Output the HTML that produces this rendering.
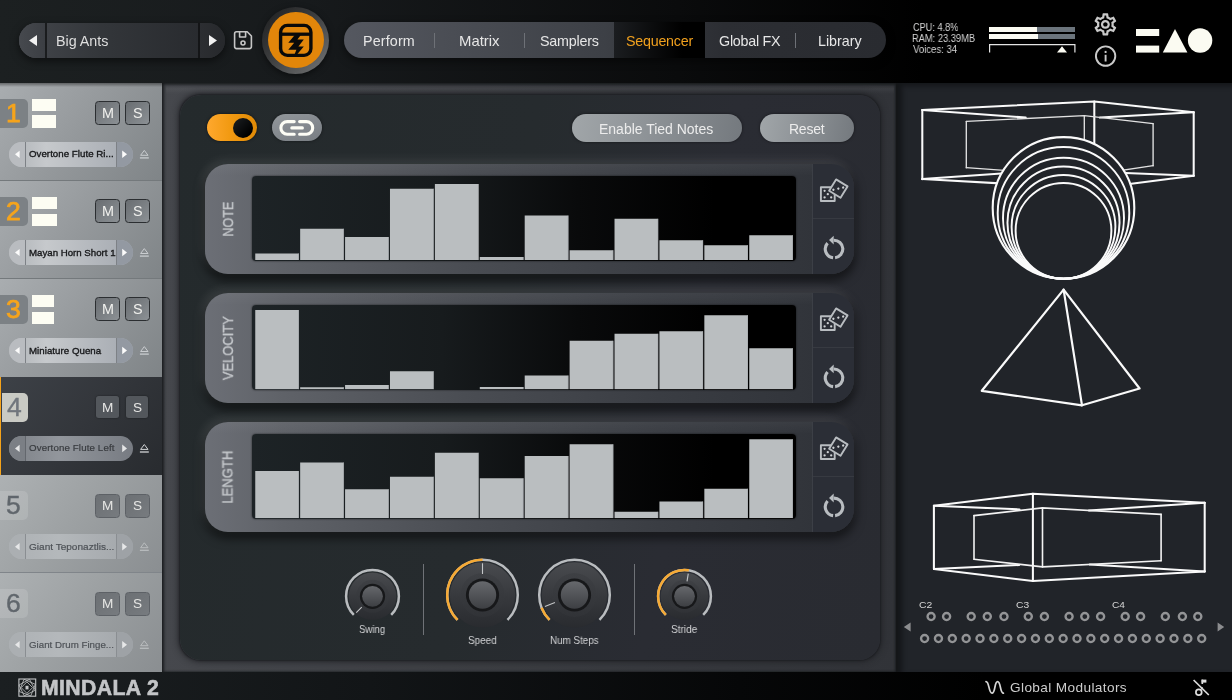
<!DOCTYPE html>
<html><head><meta charset="utf-8"><title>Mindala 2</title>
<style>
html,body{margin:0;padding:0;}
body{width:1232px;height:700px;overflow:hidden;background:#000;font-family:"Liberation Sans",sans-serif;position:relative;}
.a{position:absolute;}
.t{position:absolute;white-space:nowrap;font-family:"Liberation Sans",sans-serif;will-change:transform;}
svg{position:absolute;overflow:visible;}
</style></head><body>

<div class="a" style="left:0;top:0;width:1232px;height:83px;background:linear-gradient(90deg,#1c2021 0%,#171a1c 25%,#0a0b0c 55%,#000 75%);"></div>
<div class="a" style="left:18.7px;top:22.6px;width:206.2px;height:35.9px;border-radius:18px;background:linear-gradient(90deg,#44474c 0%,#33363a 40%,#26282c 100%);box-shadow:0 3px 8px rgba(0,0,0,.55);overflow:hidden;"><div class="a" style="left:0;top:0;width:27px;height:36px;background:linear-gradient(90deg,#46494e,#3b3e43);"></div><div class="a" style="left:26.6px;top:0;width:1.5px;height:36px;background:#1a1c1e;"></div><div class="a" style="left:179.8px;top:0;width:1.5px;height:36px;background:#141517;"></div><div class="a" style="left:181.5px;top:0;width:26px;height:36px;background:linear-gradient(90deg,#2c2e32,#26282b);"></div></div>
<svg style="left:0;top:0" width="1232" height="83"><polygon points="29,40.5 37,35 37,46" fill="#f2f2f2"/><polygon points="217,40.5 209,35 209,46" fill="#f2f2f2"/></svg>
<div class="t" style="left:56.16px;top:33.70px;font-size:14.3px;line-height:14.3px;letter-spacing:-0.019px;color:#dedede;">Big Ants</div>
<svg style="left:0;top:0" width="1232" height="83" fill="none" stroke="#c6c6c6" stroke-width="1.6" stroke-linejoin="round"><path d="M236.6 31.8 H247.2 L251.4 36 V46.6 a2 2 0 0 1 -2 2 H236.6 a2 2 0 0 1 -2 -2 V33.8 a2 2 0 0 1 2 -2 Z"/><path d="M239.6 32 V37 H245.6 V32"/><circle cx="243" cy="43" r="2"/></svg>
<div class="a" style="left:262.2px;top:6.6px;width:67.2px;height:67.2px;border-radius:50%;background:linear-gradient(135deg,#232425 10%,#3c3d3e 45%,#707172 95%);box-shadow:0 2px 6px rgba(0,0,0,.5);"></div>
<div class="a" style="left:267.9px;top:12.3px;width:55.8px;height:55.8px;border-radius:50%;background:#e2860a;"></div>
<svg style="left:0;top:0" width="1232" height="83"><rect x="280.6" y="25.4" width="30.3" height="30" rx="6.8" fill="none" stroke="#0a0a0a" stroke-width="3.4"/><path d="M281 34.2 H310.5" stroke="#0a0a0a" stroke-width="3.3" fill="none"/><polygon fill="#0a0a0a" points="294.8,35 300.8,35 297.4,39.5 303.8,39.5 298.4,46.4 303.8,46.4 296.6,55 294.3,55 296.4,49.8 288.3,49.8 294.2,42.8 288.3,42.8"/></svg>
<div class="a" style="left:344px;top:22.4px;width:542px;height:35.8px;border-radius:18px;overflow:hidden;background:linear-gradient(90deg,#555860 0%,#4a4d54 20%,#3d4046 48%,#2c2e33 70%,#292b30 100%);box-shadow:0 3px 8px rgba(0,0,0,.5);"><div class="a" style="left:270px;top:0;width:91.2px;height:36px;background:linear-gradient(90deg,#1b1d20 0%,#0a0b0c 45%,#000 75%);"></div></div>
<div class="a" style="left:433.65px;top:32.5px;width:1.2px;height:15px;background:#6e7177;"></div>
<div class="a" style="left:523.9px;top:32.5px;width:1.2px;height:15px;background:#6e7177;"></div>
<div class="a" style="left:794.9px;top:32.5px;width:1.2px;height:15px;background:#6e7177;"></div>
<div class="t" style="left:363.16px;top:33.70px;font-size:14.3px;line-height:14.3px;letter-spacing:0.144px;color:#e6e6e6;">Perform</div>
<div class="t" style="left:458.61px;top:33.70px;font-size:14.3px;line-height:14.3px;letter-spacing:0.000px;color:#e6e6e6;transform-origin:0 0;transform:scaleX(1.0423);">Matrix</div>
<div class="t" style="left:540.16px;top:33.70px;font-size:14.3px;line-height:14.3px;letter-spacing:-0.225px;color:#e6e6e6;">Samplers</div>
<div class="t" style="left:626.16px;top:33.70px;font-size:14.3px;line-height:14.3px;letter-spacing:-0.244px;color:#f0a01e;">Sequencer</div>
<div class="t" style="left:719.38px;top:33.70px;font-size:14.3px;line-height:14.3px;letter-spacing:-0.245px;color:#e6e6e6;">Global FX</div>
<div class="t" style="left:818.46px;top:33.70px;font-size:14.3px;line-height:14.3px;letter-spacing:-0.024px;color:#e6e6e6;">Library</div>
<div class="t" style="left:912.64px;top:21.91px;font-size:10.5px;line-height:10.5px;letter-spacing:0.000px;color:#d4d4d4;transform-origin:0 0;transform:scaleX(0.8740);">CPU: 4.8%</div>
<div class="t" style="left:912.36px;top:33.11px;font-size:10.5px;line-height:10.5px;letter-spacing:0.000px;color:#d4d4d4;transform-origin:0 0;transform:scaleX(0.8865);">RAM: 23.39MB</div>
<div class="t" style="left:913.05px;top:44.11px;font-size:10.5px;line-height:10.5px;letter-spacing:0.000px;color:#d4d4d4;transform-origin:0 0;transform:scaleX(0.9119);">Voices: 34</div>
<div class="a" style="left:989px;top:27px;width:86.2px;height:5px;background:#6b747c;"><div class="a" style="left:0;top:0;width:48px;height:5px;background:#fbfbf2;"></div></div>
<div class="a" style="left:989px;top:34.3px;width:86.2px;height:5px;background:#6b747c;"><div class="a" style="left:0;top:0;width:49px;height:5px;background:#fbfbf2;"></div></div>
<svg style="left:0;top:0" width="1232" height="83"><path d="M989.6 52.5 V44.6 H1074.9 V52.5" fill="none" stroke="#e4e4e4" stroke-width="1.2"/><polygon points="1057,52.5 1062,46.3 1067,52.5" fill="#fbfbf2"/></svg>
<svg style="left:1092.22px;top:11.22px" width="26.76" height="26.76" viewBox="0 0 24 24"><path d="M19.43 12.98c.04-.32.07-.64.07-.98 0-.34-.03-.66-.07-.98l2.11-1.65c.19-.15.24-.42.12-.64l-2-3.46c-.09-.16-.26-.25-.44-.25-.06 0-.12.01-.17.03l-2.49 1c-.52-.4-1.08-.73-1.69-.98l-.38-2.65C14.46 2.18 14.25 2 14 2h-4c-.25 0-.46.18-.49.42l-.38 2.65c-.61.25-1.17.59-1.69.98l-2.49-1c-.06-.02-.12-.03-.18-.03-.17 0-.34.09-.43.25l-2 3.46c-.13.22-.07.49.12.64l2.11 1.65c-.04.32-.07.65-.07.98 0 .33.03.66.07.98l-2.11 1.65c-.19.15-.24.42-.12.64l2 3.46c.09.16.26.25.44.25.06 0 .12-.01.17-.03l2.49-1c.52.4 1.08.73 1.69.98l.38 2.65c.03.24.24.42.49.42h4c.25 0 .46-.18.49-.42l.38-2.65c.61-.25 1.17-.59 1.69-.98l2.49 1c.06.02.12.03.18.03.17 0 .34-.09.43-.25l2-3.46c.12-.22.07-.49-.12-.64l-2.11-1.65zm-1.98-1.71c.04.31.05.52.05.73 0 .21-.02.43-.05.73l-.14 1.13.89.7 1.08.84-.7 1.21-1.27-.51-1.04-.42-.9.68c-.43.32-.84.56-1.25.73l-1.06.43-.16 1.13-.2 1.35h-1.4l-.19-1.35-.16-1.13-1.06-.43c-.43-.18-.83-.41-1.23-.71l-.91-.7-1.06.43-1.27.51-.7-1.21 1.08-.84.89-.7-.14-1.13c-.03-.31-.05-.54-.05-.74s.02-.43.05-.73l.14-1.13-.89-.7-1.08-.84.7-1.21 1.27.51 1.04.42.9-.68c.43-.32.84-.56 1.25-.73l1.06-.43.16-1.13.2-1.35h1.39l.19 1.35.16 1.13 1.06.43c.43.18.83.41 1.23.71l.91.7 1.06-.43 1.27-.51.7 1.21-1.07.85-.89.7.14 1.13zM12 8c-2.21 0-4 1.79-4 4s1.79 4 4 4 4-1.79 4-4-1.79-4-4-4zm0 6c-1.1 0-2-.9-2-2s.9-2 2-2 2 .9 2 2-.9 2-2 2z" fill="#c9c9c9"/></svg>
<svg style="left:0;top:0" width="1232" height="83"><circle cx="1105.6" cy="56.1" r="9.7" fill="none" stroke="#c9c9c9" stroke-width="1.9"/><rect x="1104.65" y="54.8" width="1.9" height="6.7" fill="#c9c9c9"/><rect x="1104.65" y="50.9" width="1.9" height="2.1" fill="#c9c9c9"/></svg>
<svg style="left:0;top:0" width="1232" height="83" fill="#fbfbf2"><rect x="1136" y="29" width="23.2" height="7"/><rect x="1136" y="45.6" width="23.2" height="7"/><polygon points="1175,29 1187.4,52.6 1162.8,52.6"/><circle cx="1200.1" cy="40.5" r="12.2"/></svg>
<div class="a" style="left:0;top:83px;width:162.2px;height:98.6px;background:linear-gradient(128deg,#a9adb0 0%,#969a9d 45%,#7f8487 100%);"></div>
<div class="a" style="left:0px;top:98.6px;width:27.5px;height:29.2px;border-radius:0 5px 5px 0;background:#7c8185;"></div>
<div class="t" style="left:6.23px;top:100.07px;font-size:26.5px;line-height:26.5px;letter-spacing:0.000px;color:#f6a41c;-webkit-text-stroke:0.75px #f6a41c;">1</div>
<div class="a" style="left:32.1px;top:98.6px;width:23.5px;height:12.3px;background:#fdfdf3;"></div>
<div class="a" style="left:32.1px;top:115.4px;width:23.5px;height:12.4px;background:#fdfdf3;"></div>
<div class="a" style="left:95.3px;top:100.7px;width:24.4px;height:24.2px;box-sizing:border-box;border:1.6px solid #2b2e31;border-radius:3.5px;background:linear-gradient(135deg,#696d71,#8c9195);"></div>
<div class="t" style="left:101.50px;top:105.81px;font-size:14.4px;line-height:14.4px;letter-spacing:0.000px;color:#f1f1ee;">M</div>
<div class="a" style="left:125.2px;top:100.7px;width:24.4px;height:24.2px;box-sizing:border-box;border:1.6px solid #2b2e31;border-radius:3.5px;background:linear-gradient(135deg,#696d71,#8c9195);"></div>
<div class="t" style="left:132.60px;top:105.81px;font-size:14.4px;line-height:14.4px;letter-spacing:0.000px;color:#f1f1ee;">S</div>
<div class="a" style="left:8.5px;top:141.7px;width:124.5px;height:25px;border-radius:12.5px;overflow:hidden;background:linear-gradient(90deg,#aeb2b6 0%,#c6c9cc 30%,#a4a9b0 100%);"><div class="a" style="left:0;top:0;width:16px;height:25px;background:#b9bcc0;"></div><div class="a" style="left:16px;top:0;width:1px;height:25px;background:#7d8186;"></div><div class="a" style="left:107.6px;top:0;width:1px;height:25px;background:#7d8186;"></div><div class="a" style="left:108.6px;top:0;width:16px;height:25px;background:#9399a2;"></div></div>
<svg style="left:0;top:0" width="170" height="700"><polygon points="15,154.3 19.6,150.7 19.6,157.9" fill="#fbfbfb"/><polygon points="127,154.3 122.2,150.5 122.2,158.1" fill="#fbfbfb"/><path d="M144.3 150.4 L148 155.3 H140.6 Z" fill="none" stroke="#c9cccf" stroke-width="1"/><path d="M139.9 157.9 H148.8" stroke="#c9cccf" stroke-width="1.3"/></svg>
<div class="t" style="left:28.94px;top:149.39px;font-size:9.7px;line-height:9.7px;letter-spacing:0.035px;color:#17181a;-webkit-text-stroke:0.35px #17181a;">Overtone Flute Ri...</div>
<div class="a" style="left:0;top:180.6px;width:162.2px;height:99.0px;background:linear-gradient(128deg,#a9adb0 0%,#969a9d 45%,#7f8487 100%);"></div>
<div class="a" style="left:0;top:180.1px;width:162.2px;height:1px;background:#74797c;"></div>
<div class="a" style="left:0px;top:196.8px;width:27.5px;height:29.2px;border-radius:0 5px 5px 0;background:#7c8185;"></div>
<div class="t" style="left:6.23px;top:198.27px;font-size:26.5px;line-height:26.5px;letter-spacing:0.000px;color:#f6a41c;-webkit-text-stroke:0.75px #f6a41c;">2</div>
<div class="a" style="left:32.1px;top:196.8px;width:24.9px;height:12.3px;background:#fdfdf3;"></div>
<div class="a" style="left:32.1px;top:213.6px;width:24.9px;height:12.4px;background:#fdfdf3;"></div>
<div class="a" style="left:95.3px;top:198.9px;width:24.4px;height:24.2px;box-sizing:border-box;border:1.6px solid #2b2e31;border-radius:3.5px;background:linear-gradient(135deg,#696d71,#8c9195);"></div>
<div class="t" style="left:101.50px;top:204.01px;font-size:14.4px;line-height:14.4px;letter-spacing:0.000px;color:#f1f1ee;">M</div>
<div class="a" style="left:125.2px;top:198.9px;width:24.4px;height:24.2px;box-sizing:border-box;border:1.6px solid #2b2e31;border-radius:3.5px;background:linear-gradient(135deg,#696d71,#8c9195);"></div>
<div class="t" style="left:132.60px;top:204.01px;font-size:14.4px;line-height:14.4px;letter-spacing:0.000px;color:#f1f1ee;">S</div>
<div class="a" style="left:8.5px;top:239.9px;width:124.5px;height:25px;border-radius:12.5px;overflow:hidden;background:linear-gradient(90deg,#aeb2b6 0%,#c6c9cc 30%,#a4a9b0 100%);"><div class="a" style="left:0;top:0;width:16px;height:25px;background:#b9bcc0;"></div><div class="a" style="left:16px;top:0;width:1px;height:25px;background:#7d8186;"></div><div class="a" style="left:107.6px;top:0;width:1px;height:25px;background:#7d8186;"></div><div class="a" style="left:108.6px;top:0;width:16px;height:25px;background:#9399a2;"></div></div>
<svg style="left:0;top:0" width="170" height="700"><polygon points="15,252.5 19.6,248.9 19.6,256.1" fill="#fbfbfb"/><polygon points="127,252.5 122.2,248.7 122.2,256.3" fill="#fbfbfb"/><path d="M144.3 248.6 L148 253.5 H140.6 Z" fill="none" stroke="#c9cccf" stroke-width="1"/><path d="M139.9 256.1 H148.8" stroke="#c9cccf" stroke-width="1.3"/></svg>
<div class="t" style="left:28.60px;top:247.59px;font-size:9.7px;line-height:9.7px;letter-spacing:-0.009px;color:#17181a;-webkit-text-stroke:0.35px #17181a;">Mayan Horn Short 1</div>
<div class="a" style="left:0;top:278.6px;width:162.2px;height:98.9px;background:linear-gradient(128deg,#a9adb0 0%,#969a9d 45%,#7f8487 100%);"></div>
<div class="a" style="left:0;top:278.1px;width:162.2px;height:1px;background:#74797c;"></div>
<div class="a" style="left:0px;top:294.8px;width:27.5px;height:29.2px;border-radius:0 5px 5px 0;background:#7c8185;"></div>
<div class="t" style="left:6.23px;top:296.27px;font-size:26.5px;line-height:26.5px;letter-spacing:0.000px;color:#f6a41c;-webkit-text-stroke:0.75px #f6a41c;">3</div>
<div class="a" style="left:32.1px;top:294.8px;width:22.3px;height:12.3px;background:#fdfdf3;"></div>
<div class="a" style="left:32.1px;top:311.6px;width:22.3px;height:12.4px;background:#fdfdf3;"></div>
<div class="a" style="left:95.3px;top:296.9px;width:24.4px;height:24.2px;box-sizing:border-box;border:1.6px solid #2b2e31;border-radius:3.5px;background:linear-gradient(135deg,#696d71,#8c9195);"></div>
<div class="t" style="left:101.50px;top:302.01px;font-size:14.4px;line-height:14.4px;letter-spacing:0.000px;color:#f1f1ee;">M</div>
<div class="a" style="left:125.2px;top:296.9px;width:24.4px;height:24.2px;box-sizing:border-box;border:1.6px solid #2b2e31;border-radius:3.5px;background:linear-gradient(135deg,#696d71,#8c9195);"></div>
<div class="t" style="left:132.60px;top:302.01px;font-size:14.4px;line-height:14.4px;letter-spacing:0.000px;color:#f1f1ee;">S</div>
<div class="a" style="left:8.5px;top:337.9px;width:124.5px;height:25px;border-radius:12.5px;overflow:hidden;background:linear-gradient(90deg,#aeb2b6 0%,#c6c9cc 30%,#a4a9b0 100%);"><div class="a" style="left:0;top:0;width:16px;height:25px;background:#b9bcc0;"></div><div class="a" style="left:16px;top:0;width:1px;height:25px;background:#7d8186;"></div><div class="a" style="left:107.6px;top:0;width:1px;height:25px;background:#7d8186;"></div><div class="a" style="left:108.6px;top:0;width:16px;height:25px;background:#9399a2;"></div></div>
<svg style="left:0;top:0" width="170" height="700"><polygon points="15,350.5 19.6,346.9 19.6,354.1" fill="#fbfbfb"/><polygon points="127,350.5 122.2,346.7 122.2,354.3" fill="#fbfbfb"/><path d="M144.3 346.6 L148 351.5 H140.6 Z" fill="none" stroke="#c9cccf" stroke-width="1"/><path d="M139.9 354.1 H148.8" stroke="#c9cccf" stroke-width="1.3"/></svg>
<div class="t" style="left:28.60px;top:345.59px;font-size:9.7px;line-height:9.7px;letter-spacing:0.039px;color:#17181a;-webkit-text-stroke:0.35px #17181a;">Miniature Quena</div>
<div class="a" style="left:0;top:376.5px;width:162.2px;height:99.8px;background:linear-gradient(128deg,#3d4147 0%,#33363b 50%,#282b2f 100%);"></div>
<div class="a" style="left:0;top:376.5px;width:1.3px;height:98.3px;background:#f5a31a;"></div>
<div class="a" style="left:1.5px;top:392.7px;width:26.0px;height:29.2px;border-radius:0 5px 5px 0;background:#c9cac4;"></div>
<div class="t" style="left:6.93px;top:394.17px;font-size:26.5px;line-height:26.5px;letter-spacing:0.000px;color:#70767d;-webkit-text-stroke:0.4px #70767d;">4</div>
<div class="a" style="left:96.0px;top:395.6px;width:22.6px;height:22.9px;border-radius:2.5px;background:#53575c;box-shadow:0 0 2px rgba(0,0,0,.5);"></div>
<div class="t" style="left:101.84px;top:400.69px;font-size:13.6px;line-height:13.6px;letter-spacing:0.000px;color:#e6e6e4;">M</div>
<div class="a" style="left:125.9px;top:395.6px;width:22.6px;height:22.9px;border-radius:2.5px;background:#53575c;box-shadow:0 0 2px rgba(0,0,0,.5);"></div>
<div class="t" style="left:132.86px;top:400.69px;font-size:13.6px;line-height:13.6px;letter-spacing:0.000px;color:#e6e6e4;">S</div>
<div class="a" style="left:8.5px;top:435.8px;width:124.5px;height:25px;border-radius:12.5px;overflow:hidden;background:linear-gradient(90deg,#7d8187 0%,#92969c 40%,#777b82 100%);"><div class="a" style="left:0;top:0;width:16px;height:25px;background:#7b7f85;"></div><div class="a" style="left:16px;top:0;width:1px;height:25px;background:#63676d;"></div></div>
<svg style="left:0;top:0" width="170" height="700"><polygon points="15,448.4 19.6,444.8 19.6,452.0" fill="#e4e5e6"/><polygon points="127,448.4 122.2,444.6 122.2,452.2" fill="#e4e5e6"/><path d="M144.3 444.5 L148 449.4 H140.6 Z" fill="none" stroke="#d2d4d6" stroke-width="1"/><path d="M139.9 452.0 H148.8" stroke="#d2d4d6" stroke-width="1.3"/></svg>
<div class="t" style="left:28.86px;top:443.49px;font-size:9.7px;line-height:9.7px;letter-spacing:0.139px;color:#383b3f;-webkit-text-stroke:0.2px #383b3f;">Overtone Flute Left</div>
<div class="a" style="left:0;top:475.3px;width:162.2px;height:99.0px;background:linear-gradient(128deg,#adb1b3 0%,#9da1a3 45%,#8a8e91 100%);"></div>
<div class="a" style="left:0px;top:491.0px;width:27.5px;height:29.2px;border-radius:0 5px 5px 0;background:rgba(255,255,255,.13);"></div>
<div class="t" style="left:6.23px;top:492.47px;font-size:26.5px;line-height:26.5px;letter-spacing:0.000px;color:#60666c;-webkit-text-stroke:0.4px #60666c;">5</div>
<div class="a" style="left:95.3px;top:493.9px;width:24.4px;height:24.2px;box-sizing:border-box;border:1.2px solid #5d6166;border-radius:3.5px;background:linear-gradient(135deg,#6c7074,#777b7f);"></div>
<div class="t" style="left:101.84px;top:498.99px;font-size:13.6px;line-height:13.6px;letter-spacing:0.000px;color:#e6e6e4;">M</div>
<div class="a" style="left:125.2px;top:493.9px;width:24.4px;height:24.2px;box-sizing:border-box;border:1.2px solid #5d6166;border-radius:3.5px;background:linear-gradient(135deg,#6c7074,#777b7f);"></div>
<div class="t" style="left:132.86px;top:498.99px;font-size:13.6px;line-height:13.6px;letter-spacing:0.000px;color:#e6e6e4;">S</div>
<div class="a" style="left:8.5px;top:534.1px;width:124.5px;height:25px;border-radius:12.5px;overflow:hidden;background:linear-gradient(90deg,#adb1b4 0%,#b4b8bb 40%,#a2a6aa 100%);"><div class="a" style="left:0;top:0;width:16px;height:25px;background:#abafb2;"></div><div class="a" style="left:16px;top:0;width:1px;height:25px;background:#8a8e92;"></div><div class="a" style="left:107.6px;top:0;width:1px;height:25px;background:#8a8e92;"></div><div class="a" style="left:108.6px;top:0;width:16px;height:25px;background:#9ea2a6;"></div></div>
<svg style="left:0;top:0" width="170" height="700"><polygon points="15,546.7 19.6,543.1 19.6,550.3" fill="#e6e7e8"/><polygon points="127,546.7 122.2,542.9 122.2,550.5" fill="#e6e7e8"/><path d="M144.3 542.8 L148 547.7 H140.6 Z" fill="none" stroke="#b9bcbe" stroke-width="1"/><path d="M139.9 550.3 H148.8" stroke="#b9bcbe" stroke-width="1.3"/></svg>
<div class="t" style="left:28.80px;top:541.79px;font-size:9.7px;line-height:9.7px;letter-spacing:0.000px;color:#4e5257;-webkit-text-stroke:0.2px #4e5257;transform-origin:0 0;transform:scaleX(1.0382);">Giant Teponaztlis...</div>
<div class="a" style="left:0;top:572.8px;width:162.2px;height:99.2px;background:linear-gradient(128deg,#adb1b3 0%,#9da1a3 45%,#8a8e91 100%);"></div>
<div class="a" style="left:0;top:572.3px;width:162.2px;height:1px;background:#74797c;"></div>
<div class="a" style="left:0;top:572.3px;width:162.2px;height:1px;background:#80858a;"></div>
<div class="a" style="left:0px;top:589.0px;width:27.5px;height:29.2px;border-radius:0 5px 5px 0;background:rgba(255,255,255,.13);"></div>
<div class="t" style="left:6.23px;top:590.47px;font-size:26.5px;line-height:26.5px;letter-spacing:0.000px;color:#60666c;-webkit-text-stroke:0.4px #60666c;">6</div>
<div class="a" style="left:95.3px;top:591.9px;width:24.4px;height:24.2px;box-sizing:border-box;border:1.2px solid #5d6166;border-radius:3.5px;background:linear-gradient(135deg,#6c7074,#777b7f);"></div>
<div class="t" style="left:101.84px;top:596.99px;font-size:13.6px;line-height:13.6px;letter-spacing:0.000px;color:#e6e6e4;">M</div>
<div class="a" style="left:125.2px;top:591.9px;width:24.4px;height:24.2px;box-sizing:border-box;border:1.2px solid #5d6166;border-radius:3.5px;background:linear-gradient(135deg,#6c7074,#777b7f);"></div>
<div class="t" style="left:132.86px;top:596.99px;font-size:13.6px;line-height:13.6px;letter-spacing:0.000px;color:#e6e6e4;">S</div>
<div class="a" style="left:8.5px;top:632.1px;width:124.5px;height:25px;border-radius:12.5px;overflow:hidden;background:linear-gradient(90deg,#adb1b4 0%,#b4b8bb 40%,#a2a6aa 100%);"><div class="a" style="left:0;top:0;width:16px;height:25px;background:#abafb2;"></div><div class="a" style="left:16px;top:0;width:1px;height:25px;background:#8a8e92;"></div><div class="a" style="left:107.6px;top:0;width:1px;height:25px;background:#8a8e92;"></div><div class="a" style="left:108.6px;top:0;width:16px;height:25px;background:#9ea2a6;"></div></div>
<svg style="left:0;top:0" width="170" height="700"><polygon points="15,644.7 19.6,641.1 19.6,648.3" fill="#e6e7e8"/><polygon points="127,644.7 122.2,640.9 122.2,648.5" fill="#e6e7e8"/><path d="M144.3 640.8 L148 645.7 H140.6 Z" fill="none" stroke="#b9bcbe" stroke-width="1"/><path d="M139.9 648.3 H148.8" stroke="#b9bcbe" stroke-width="1.3"/></svg>
<div class="t" style="left:28.81px;top:639.79px;font-size:9.7px;line-height:9.7px;letter-spacing:0.024px;color:#4e5257;-webkit-text-stroke:0.2px #4e5257;">Giant Drum Finge...</div>
<div class="a" style="left:0;top:83px;width:162.2px;height:4px;background:linear-gradient(180deg,rgba(0,0,0,.4),rgba(0,0,0,0));"></div>
<div class="a" style="left:0;top:672px;width:1232px;height:28px;background:linear-gradient(90deg,#1b1f21 0%,#121517 30%,#060708 60%,#000 80%);"></div>
<svg style="left:0;top:0" width="200" height="700" fill="none" stroke="#c3c5c7" stroke-width="0.8"><rect x="18.9" y="679" width="16.8" height="17.2" stroke-width="1.1"/><polygon points="24,679.3 35.3,684.3 30.8,695.9 19.2,691.5"/><polygon points="29.5,679.3 35.3,690.2 24.3,695.9 19,685"/><polygon points="26.9,681.9 32.6,687.6 26.9,693.3 21.2,687.6"/><rect x="25.5" y="685.8" width="3" height="3.6" fill="#c3c5c7" stroke="none"/></svg>
<div class="t" style="left:40.72px;top:677.15px;font-size:21.2px;line-height:21.2px;letter-spacing:0.405px;color:#c3c5c7;font-weight:bold;-webkit-text-stroke:0.6px #c3c5c7;">MINDALA 2</div>
<svg style="left:0;top:0" width="1232" height="700" fill="none" stroke="#d6d6d6" stroke-width="1.7" stroke-linecap="round"><path d="M986 681.6 C989.5 681.6 988.5 693.2 992 693.2 C995.6 693.2 994.2 681.6 997.6 681.6 C1001 681.6 999.8 693.2 1003.4 693.2"/></svg>
<div class="t" style="left:1010.42px;top:682.48px;font-size:12.9px;line-height:12.9px;letter-spacing:0.355px;color:#cdcdcd;transform-origin:0 0;transform:scaleX(1.0580);">Global Modulators</div>
<svg style="left:0;top:0" width="1232" height="700" fill="none" stroke="#dcdcdc" stroke-width="1.7"><path d="M1193.6 680 L1208.8 695"/><circle cx="1198.8" cy="692.3" r="2.9"/><path d="M1201.8 689.5 V687"/><rect x="1201.6" y="679.6" width="4.8" height="3" fill="#dcdcdc" stroke="none"/><path d="M1202.3 679.6 V684" /></svg><div class="a" style="left:162.2px;top:83px;width:734.3px;height:589px;background:linear-gradient(90deg,#46484d 0%,#3f4146 30%,#37393e 65%,#313338 100%);box-shadow:inset 2px 0 3px rgba(18,20,22,.75), inset 0 2px 3px rgba(18,20,22,.55), inset -1px 0 2px rgba(18,20,22,.4);"></div>
<div class="a" style="left:896.2px;top:83px;width:1.6px;height:589px;background:#141618;"></div>
<div class="a" style="left:166px;top:85px;width:728px;height:9px;background:linear-gradient(180deg,rgba(255,255,255,0),rgba(255,255,255,.045) 45%,rgba(255,255,255,0));"></div>
<div class="a" style="left:179.6px;top:95.4px;width:700.2px;height:564.4px;border-radius:21px;background:linear-gradient(100deg,#242a2c 0%,#262b2e 45%,#2a2c33 70%,#292b31 100%);box-shadow:0 0 6px 1.5px rgba(32,34,38,.8), 0 0 1.5px .5px rgba(20,22,25,.7);"></div>
<div class="a" style="left:207px;top:114px;width:50px;height:27.4px;border-radius:13.7px;background:linear-gradient(90deg,#ffa82e 0%,#f29a12 45%,#e08a06 100%);box-shadow:0 0 3px rgba(0,0,0,.6);"></div>
<div class="a" style="left:233px;top:117.7px;width:20px;height:20px;border-radius:50%;background:linear-gradient(135deg,#1d2023,#000 80%);"></div>
<div class="a" style="left:272px;top:114px;width:50px;height:27.4px;border-radius:13.7px;background:linear-gradient(160deg,#92979b 0%,#858a8f 50%,#787d82 100%);box-shadow:0 0 3px rgba(0,0,0,.5);"></div>
<svg style="left:0;top:0" width="1232" height="700" fill="none" stroke="#fdfdf5" stroke-width="3.1" stroke-linecap="round"><path d="M294.2 121.6 H287.2 a6.3 6.3 0 0 0 0 12.6 H294.2"/><path d="M299.6 121.6 H306.4 a6.3 6.3 0 0 1 0 12.6 H299.6"/><path d="M291.8 127.9 H302.4"/></svg>
<div class="a" style="left:572px;top:114.3px;width:170px;height:28px;border-radius:14px;background:linear-gradient(100deg,#a1a6a9 0%,#92979b 35%,#74797e 100%);box-shadow:0 0 3px rgba(0,0,0,.5);"></div>
<div class="a" style="left:760px;top:114.3px;width:94px;height:28px;border-radius:14px;background:linear-gradient(100deg,#a1a6a9 0%,#92979b 35%,#74797e 100%);box-shadow:0 0 3px rgba(0,0,0,.5);"></div>
<div class="t" style="left:599.48px;top:121.95px;font-size:14px;line-height:14px;letter-spacing:-0.011px;color:#ececec;">Enable Tied Notes</div>
<div class="t" style="left:788.98px;top:121.95px;font-size:14px;line-height:14px;letter-spacing:-0.237px;color:#ececec;">Reset</div>
<div class="a" style="left:204.5px;top:163.75px;width:649.3px;height:110.5px;border-radius:23px;overflow:hidden;background:linear-gradient(90deg,#6c6f76 0%,#5f6268 12%,#4a4d53 40%,#3a3d43 70%,#31343a 94%);box-shadow:-3px -4px 10px rgba(255,255,255,.10),0 5px 10px 2px rgba(0,0,0,.5);"><div class="a" style="left:0;top:0;width:649.3px;height:12.5px;background:linear-gradient(180deg,rgba(255,255,255,.04),rgba(255,255,255,0));"></div><div class="a" style="left:608.2px;top:0;width:41.1px;height:110.5px;background:#2b2e36;"></div><div class="a" style="left:607.8px;top:0;width:1px;height:110.5px;background:#3c3f46;"></div><div class="a" style="left:608.8px;top:54px;width:40.5px;height:1px;background:#373a41;"></div></div>
<div class="a" style="left:251.8px;top:176.25px;width:544px;height:84.6px;border-radius:4px;background:linear-gradient(90deg,#1d2326 0%,#171b1d 35%,#090a0b 60%,#000 85%);box-shadow:0 0 2px rgba(0,0,0,.7);"></div>
<svg style="left:0;top:0" width="1232" height="700"><rect x="255.25" y="253.50" width="43.65" height="6.50" fill="#babec0"/><rect x="298.30" y="253.50" width="0.6" height="6.50" fill="#a4a8ab"/><rect x="300.16" y="228.75" width="43.65" height="31.25" fill="#babec0"/><rect x="343.21" y="228.75" width="0.6" height="31.25" fill="#a4a8ab"/><rect x="345.07" y="237.00" width="43.65" height="23.00" fill="#babec0"/><rect x="388.12" y="237.00" width="0.6" height="23.00" fill="#a4a8ab"/><rect x="389.98" y="188.75" width="43.65" height="71.25" fill="#babec0"/><rect x="433.03" y="188.75" width="0.6" height="71.25" fill="#a4a8ab"/><rect x="434.89" y="184.00" width="43.65" height="76.00" fill="#babec0"/><rect x="477.94" y="184.00" width="0.6" height="76.00" fill="#a4a8ab"/><rect x="479.79" y="257.00" width="43.65" height="3.00" fill="#babec0"/><rect x="522.84" y="257.00" width="0.6" height="3.00" fill="#a4a8ab"/><rect x="524.70" y="215.50" width="43.65" height="44.50" fill="#babec0"/><rect x="567.75" y="215.50" width="0.6" height="44.50" fill="#a4a8ab"/><rect x="569.61" y="250.25" width="43.65" height="9.75" fill="#babec0"/><rect x="612.66" y="250.25" width="0.6" height="9.75" fill="#a4a8ab"/><rect x="614.52" y="218.75" width="43.65" height="41.25" fill="#babec0"/><rect x="657.57" y="218.75" width="0.6" height="41.25" fill="#a4a8ab"/><rect x="659.43" y="240.25" width="43.65" height="19.75" fill="#babec0"/><rect x="702.48" y="240.25" width="0.6" height="19.75" fill="#a4a8ab"/><rect x="704.34" y="245.25" width="43.65" height="14.75" fill="#babec0"/><rect x="747.39" y="245.25" width="0.6" height="14.75" fill="#a4a8ab"/><rect x="749.25" y="235.25" width="43.65" height="24.75" fill="#babec0"/><rect x="792.30" y="235.25" width="0.6" height="24.75" fill="#a4a8ab"/></svg>
<div class="t" style="left:227.7px;top:218.9px;width:0;height:0;"><div class="t" style="left:-20.28px;top:-7.16px;font-size:14.6px;line-height:14.6px;color:#c3c6ca;-webkit-text-stroke:0.35px #c3c6ca;transform-origin:20.28px 7.16px;transform:rotate(-90deg) scaleX(0.8630);">NOTE</div></div>
<svg style="left:834px;top:190.05px" width="1" height="1"><g fill="none" stroke="#b9bdc1" stroke-width="1.9" stroke-linejoin="round"><rect x="-13.1" y="-2.8" width="13.8" height="13.8"/></g><g fill="#cfd2d5"><circle cx="-9.4" cy="0.8" r="1.15"/><circle cx="-6.2" cy="4.2" r="1.15"/><circle cx="-9.4" cy="7.4" r="1.15"/><circle cx="-2.8" cy="7.4" r="1.15"/></g><g transform="translate(4.3,-1.4) rotate(31.5)"><rect x="-6.7" y="-6.7" width="13.4" height="13.4" fill="#2b2e36" stroke="#b9bdc1" stroke-width="1.9" stroke-linejoin="round"/><circle cx="-3.6" cy="3.5" r="1.15" fill="#cfd2d5"/><circle cx="0" cy="0" r="1.15" fill="#cfd2d5"/><circle cx="3.6" cy="-3.5" r="1.15" fill="#cfd2d5"/></g></svg>
<svg style="left:0;top:0" width="1232" height="700"><g fill="none" stroke="#b9bdc1" stroke-width="3.1"><path d="M833.79 240.21 A8.8 8.8 0 0 1 835.10 257.74"/><path d="M833.10 257.74 A8.8 8.8 0 0 1 827.56 243.11"/></g><polygon points="829.00,240.10 833.70,235.70 833.70,244.50" fill="#b9bdc1"/></svg>
<div class="a" style="left:204.5px;top:292.60px;width:649.3px;height:110.5px;border-radius:23px;overflow:hidden;background:linear-gradient(90deg,#6c6f76 0%,#5f6268 12%,#4a4d53 40%,#3a3d43 70%,#31343a 94%);box-shadow:-3px -4px 10px rgba(255,255,255,.10),0 5px 10px 2px rgba(0,0,0,.5);"><div class="a" style="left:0;top:0;width:649.3px;height:12.5px;background:linear-gradient(180deg,rgba(255,255,255,.04),rgba(255,255,255,0));"></div><div class="a" style="left:608.2px;top:0;width:41.1px;height:110.5px;background:#2b2e36;"></div><div class="a" style="left:607.8px;top:0;width:1px;height:110.5px;background:#3c3f46;"></div><div class="a" style="left:608.8px;top:54px;width:40.5px;height:1px;background:#373a41;"></div></div>
<div class="a" style="left:251.8px;top:305.40px;width:544px;height:84.6px;border-radius:4px;background:linear-gradient(90deg,#1d2326 0%,#171b1d 35%,#090a0b 60%,#000 85%);box-shadow:0 0 2px rgba(0,0,0,.7);"></div>
<svg style="left:0;top:0" width="1232" height="700"><rect x="255.25" y="310.00" width="43.65" height="79.15" fill="#babec0"/><rect x="298.30" y="310.00" width="0.6" height="79.15" fill="#a4a8ab"/><rect x="300.16" y="387.25" width="43.65" height="1.90" fill="#babec0"/><rect x="343.21" y="387.25" width="0.6" height="1.90" fill="#a4a8ab"/><rect x="345.07" y="385.00" width="43.65" height="4.15" fill="#babec0"/><rect x="388.12" y="385.00" width="0.6" height="4.15" fill="#a4a8ab"/><rect x="389.98" y="371.25" width="43.65" height="17.90" fill="#babec0"/><rect x="433.03" y="371.25" width="0.6" height="17.90" fill="#a4a8ab"/><rect x="479.79" y="387.00" width="43.65" height="2.15" fill="#babec0"/><rect x="522.84" y="387.00" width="0.6" height="2.15" fill="#a4a8ab"/><rect x="524.70" y="375.50" width="43.65" height="13.65" fill="#babec0"/><rect x="567.75" y="375.50" width="0.6" height="13.65" fill="#a4a8ab"/><rect x="569.61" y="340.75" width="43.65" height="48.40" fill="#babec0"/><rect x="612.66" y="340.75" width="0.6" height="48.40" fill="#a4a8ab"/><rect x="614.52" y="333.75" width="43.65" height="55.40" fill="#babec0"/><rect x="657.57" y="333.75" width="0.6" height="55.40" fill="#a4a8ab"/><rect x="659.43" y="331.25" width="43.65" height="57.90" fill="#babec0"/><rect x="702.48" y="331.25" width="0.6" height="57.90" fill="#a4a8ab"/><rect x="704.34" y="315.25" width="43.65" height="73.90" fill="#babec0"/><rect x="747.39" y="315.25" width="0.6" height="73.90" fill="#a4a8ab"/><rect x="749.25" y="348.25" width="43.65" height="40.90" fill="#babec0"/><rect x="792.30" y="348.25" width="0.6" height="40.90" fill="#a4a8ab"/></svg>
<div class="t" style="left:227.7px;top:347.8px;width:0;height:0;"><div class="t" style="left:-36.10px;top:-7.16px;font-size:14.6px;line-height:14.6px;color:#c3c6ca;-webkit-text-stroke:0.35px #c3c6ca;transform-origin:36.10px 7.16px;transform:rotate(-90deg) scaleX(0.8863);">VELOCITY</div></div>
<svg style="left:834px;top:318.90px" width="1" height="1"><g fill="none" stroke="#b9bdc1" stroke-width="1.9" stroke-linejoin="round"><rect x="-13.1" y="-2.8" width="13.8" height="13.8"/></g><g fill="#cfd2d5"><circle cx="-9.4" cy="0.8" r="1.15"/><circle cx="-6.2" cy="4.2" r="1.15"/><circle cx="-9.4" cy="7.4" r="1.15"/><circle cx="-2.8" cy="7.4" r="1.15"/></g><g transform="translate(4.3,-1.4) rotate(31.5)"><rect x="-6.7" y="-6.7" width="13.4" height="13.4" fill="#2b2e36" stroke="#b9bdc1" stroke-width="1.9" stroke-linejoin="round"/><circle cx="-3.6" cy="3.5" r="1.15" fill="#cfd2d5"/><circle cx="0" cy="0" r="1.15" fill="#cfd2d5"/><circle cx="3.6" cy="-3.5" r="1.15" fill="#cfd2d5"/></g></svg>
<svg style="left:0;top:0" width="1232" height="700"><g fill="none" stroke="#b9bdc1" stroke-width="3.1"><path d="M833.79 369.06 A8.8 8.8 0 0 1 835.10 386.59"/><path d="M833.10 386.59 A8.8 8.8 0 0 1 827.56 371.96"/></g><polygon points="829.00,368.95 833.70,364.55 833.70,373.35" fill="#b9bdc1"/></svg>
<div class="a" style="left:204.5px;top:421.65px;width:649.3px;height:110.5px;border-radius:23px;overflow:hidden;background:linear-gradient(90deg,#6c6f76 0%,#5f6268 12%,#4a4d53 40%,#3a3d43 70%,#31343a 94%);box-shadow:-3px -4px 10px rgba(255,255,255,.10),0 5px 10px 2px rgba(0,0,0,.5);"><div class="a" style="left:0;top:0;width:649.3px;height:12.5px;background:linear-gradient(180deg,rgba(255,255,255,.04),rgba(255,255,255,0));"></div><div class="a" style="left:608.2px;top:0;width:41.1px;height:110.5px;background:#2b2e36;"></div><div class="a" style="left:607.8px;top:0;width:1px;height:110.5px;background:#3c3f46;"></div><div class="a" style="left:608.8px;top:54px;width:40.5px;height:1px;background:#373a41;"></div></div>
<div class="a" style="left:251.8px;top:434.30px;width:544px;height:84.6px;border-radius:4px;background:linear-gradient(90deg,#1d2326 0%,#171b1d 35%,#090a0b 60%,#000 85%);box-shadow:0 0 2px rgba(0,0,0,.7);"></div>
<svg style="left:0;top:0" width="1232" height="700"><rect x="255.25" y="471.00" width="43.65" height="47.05" fill="#babec0"/><rect x="298.30" y="471.00" width="0.6" height="47.05" fill="#a4a8ab"/><rect x="300.16" y="462.50" width="43.65" height="55.55" fill="#babec0"/><rect x="343.21" y="462.50" width="0.6" height="55.55" fill="#a4a8ab"/><rect x="345.07" y="489.25" width="43.65" height="28.80" fill="#babec0"/><rect x="388.12" y="489.25" width="0.6" height="28.80" fill="#a4a8ab"/><rect x="389.98" y="476.75" width="43.65" height="41.30" fill="#babec0"/><rect x="433.03" y="476.75" width="0.6" height="41.30" fill="#a4a8ab"/><rect x="434.89" y="452.75" width="43.65" height="65.30" fill="#babec0"/><rect x="477.94" y="452.75" width="0.6" height="65.30" fill="#a4a8ab"/><rect x="479.79" y="478.25" width="43.65" height="39.80" fill="#babec0"/><rect x="522.84" y="478.25" width="0.6" height="39.80" fill="#a4a8ab"/><rect x="524.70" y="456.00" width="43.65" height="62.05" fill="#babec0"/><rect x="567.75" y="456.00" width="0.6" height="62.05" fill="#a4a8ab"/><rect x="569.61" y="444.25" width="43.65" height="73.80" fill="#babec0"/><rect x="612.66" y="444.25" width="0.6" height="73.80" fill="#a4a8ab"/><rect x="614.52" y="511.75" width="43.65" height="6.30" fill="#babec0"/><rect x="657.57" y="511.75" width="0.6" height="6.30" fill="#a4a8ab"/><rect x="659.43" y="501.50" width="43.65" height="16.55" fill="#babec0"/><rect x="702.48" y="501.50" width="0.6" height="16.55" fill="#a4a8ab"/><rect x="704.34" y="488.75" width="43.65" height="29.30" fill="#babec0"/><rect x="747.39" y="488.75" width="0.6" height="29.30" fill="#a4a8ab"/><rect x="749.25" y="439.25" width="43.65" height="78.80" fill="#babec0"/><rect x="792.30" y="439.25" width="0.6" height="78.80" fill="#a4a8ab"/></svg>
<div class="t" style="left:227.7px;top:476.8px;width:0;height:0;"><div class="t" style="left:-29.61px;top:-7.16px;font-size:14.6px;line-height:14.6px;color:#c3c6ca;-webkit-text-stroke:0.35px #c3c6ca;transform-origin:29.61px 7.16px;transform:rotate(-90deg) scaleX(0.8950);">LENGTH</div></div>
<svg style="left:834px;top:447.95px" width="1" height="1"><g fill="none" stroke="#b9bdc1" stroke-width="1.9" stroke-linejoin="round"><rect x="-13.1" y="-2.8" width="13.8" height="13.8"/></g><g fill="#cfd2d5"><circle cx="-9.4" cy="0.8" r="1.15"/><circle cx="-6.2" cy="4.2" r="1.15"/><circle cx="-9.4" cy="7.4" r="1.15"/><circle cx="-2.8" cy="7.4" r="1.15"/></g><g transform="translate(4.3,-1.4) rotate(31.5)"><rect x="-6.7" y="-6.7" width="13.4" height="13.4" fill="#2b2e36" stroke="#b9bdc1" stroke-width="1.9" stroke-linejoin="round"/><circle cx="-3.6" cy="3.5" r="1.15" fill="#cfd2d5"/><circle cx="0" cy="0" r="1.15" fill="#cfd2d5"/><circle cx="3.6" cy="-3.5" r="1.15" fill="#cfd2d5"/></g></svg>
<svg style="left:0;top:0" width="1232" height="700"><g fill="none" stroke="#b9bdc1" stroke-width="3.1"><path d="M833.79 498.11 A8.8 8.8 0 0 1 835.10 515.64"/><path d="M833.10 515.64 A8.8 8.8 0 0 1 827.56 501.01"/></g><polygon points="829.00,498.00 833.70,493.60 833.70,502.40" fill="#b9bdc1"/></svg>
<div class="a" style="left:422.7px;top:563.8px;width:1.2px;height:71.4px;background:#6f7277;"></div>
<div class="a" style="left:634.1999999999999px;top:563.8px;width:1.2px;height:71.4px;background:#6f7277;"></div>
<svg style="left:0;top:0" width="1232" height="700">
<defs><linearGradient id="kba" x1="0" y1="0" x2="0" y2="1"><stop offset="0" stop-color="#494b4f"/><stop offset=".55" stop-color="#36383c"/><stop offset="1" stop-color="#292b2f"/></linearGradient><linearGradient id="kca" x1="0" y1="0" x2="0" y2="1"><stop offset="0" stop-color="#66686c"/><stop offset="1" stop-color="#3d3f43"/></linearGradient><linearGradient id="kda" x1="0" y1="0" x2="0" y2="1"><stop offset="0" stop-color="#3c3e42"/><stop offset="1" stop-color="#323438"/></linearGradient></defs><circle cx="372.5" cy="596.3" r="23.8" fill="url(#kba)"/><circle cx="372.5" cy="596.3" r="16.5" fill="url(#kda)" opacity=".7"/><circle cx="372.5" cy="596.3" r="12.6" fill="#17181a"/><circle cx="372.5" cy="596.3" r="10.4" fill="url(#kca)"/><path d="M353.83 614.97 A26.4 26.4 0 1 1 391.17 614.97" fill="none" stroke="#b9bcbf" stroke-width="2.5"/><path d="M356.24 612.56 L361.75 607.05" stroke="#c4c6c8" stroke-width="1.1"/>
<defs><linearGradient id="kbb" x1="0" y1="0" x2="0" y2="1"><stop offset="0" stop-color="#494b4f"/><stop offset=".55" stop-color="#36383c"/><stop offset="1" stop-color="#292b2f"/></linearGradient><linearGradient id="kcb" x1="0" y1="0" x2="0" y2="1"><stop offset="0" stop-color="#66686c"/><stop offset="1" stop-color="#3d3f43"/></linearGradient><linearGradient id="kdb" x1="0" y1="0" x2="0" y2="1"><stop offset="0" stop-color="#3c3e42"/><stop offset="1" stop-color="#323438"/></linearGradient></defs><circle cx="482.5" cy="595" r="32.7" fill="url(#kbb)"/><circle cx="482.5" cy="595" r="22" fill="url(#kdb)" opacity=".7"/><circle cx="482.5" cy="595" r="16.6" fill="#17181a"/><circle cx="482.5" cy="595" r="13.7" fill="url(#kcb)"/><path d="M457.54 619.96 A35.3 35.3 0 1 1 507.46 619.96" fill="none" stroke="#b9bcbf" stroke-width="2.5"/><path d="M457.54 619.96 A35.3 35.3 0 0 1 482.50 559.70" fill="none" stroke="#f6aa35" stroke-width="2.5"/><path d="M482.50 563.30 L482.50 574.00" stroke="#c4c6c8" stroke-width="1.1"/>
<defs><linearGradient id="kbc" x1="0" y1="0" x2="0" y2="1"><stop offset="0" stop-color="#494b4f"/><stop offset=".55" stop-color="#36383c"/><stop offset="1" stop-color="#292b2f"/></linearGradient><linearGradient id="kcc" x1="0" y1="0" x2="0" y2="1"><stop offset="0" stop-color="#66686c"/><stop offset="1" stop-color="#3d3f43"/></linearGradient><linearGradient id="kdc" x1="0" y1="0" x2="0" y2="1"><stop offset="0" stop-color="#3c3e42"/><stop offset="1" stop-color="#323438"/></linearGradient></defs><circle cx="574.5" cy="595" r="32.7" fill="url(#kbc)"/><circle cx="574.5" cy="595" r="22" fill="url(#kdc)" opacity=".7"/><circle cx="574.5" cy="595" r="16.6" fill="#17181a"/><circle cx="574.5" cy="595" r="13.7" fill="url(#kcc)"/><path d="M549.54 619.96 A35.3 35.3 0 1 1 599.46 619.96" fill="none" stroke="#b9bcbf" stroke-width="2.5"/><path d="M549.54 619.96 A35.3 35.3 0 0 1 541.60 607.79" fill="none" stroke="#f6aa35" stroke-width="2.5"/><path d="M544.95 606.48 L554.93 602.61" stroke="#c4c6c8" stroke-width="1.1"/>
<defs><linearGradient id="kbd" x1="0" y1="0" x2="0" y2="1"><stop offset="0" stop-color="#494b4f"/><stop offset=".55" stop-color="#36383c"/><stop offset="1" stop-color="#292b2f"/></linearGradient><linearGradient id="kcd" x1="0" y1="0" x2="0" y2="1"><stop offset="0" stop-color="#66686c"/><stop offset="1" stop-color="#3d3f43"/></linearGradient><linearGradient id="kdd" x1="0" y1="0" x2="0" y2="1"><stop offset="0" stop-color="#3c3e42"/><stop offset="1" stop-color="#323438"/></linearGradient></defs><circle cx="684.5" cy="596.3" r="23.8" fill="url(#kbd)"/><circle cx="684.5" cy="596.3" r="16.5" fill="url(#kdd)" opacity=".7"/><circle cx="684.5" cy="596.3" r="12.6" fill="#17181a"/><circle cx="684.5" cy="596.3" r="10.4" fill="url(#kcd)"/><path d="M665.83 614.97 A26.4 26.4 0 1 1 703.17 614.97" fill="none" stroke="#b9bcbf" stroke-width="2.5"/><path d="M665.83 614.97 A26.4 26.4 0 0 1 688.83 570.26" fill="none" stroke="#f6aa35" stroke-width="2.5"/><path d="M688.28 573.61 L687.00 581.31" stroke="#c4c6c8" stroke-width="1.1"/>
</svg>
<div class="t" style="left:359.47px;top:623.63px;font-size:10.6px;line-height:10.6px;letter-spacing:0.000px;color:#d2d3d5;transform-origin:0 0;transform:scaleX(0.9074);">Swing</div>
<div class="t" style="left:468.25px;top:634.83px;font-size:10.6px;line-height:10.6px;letter-spacing:0.000px;color:#d2d3d5;transform-origin:0 0;transform:scaleX(0.9383);">Speed</div>
<div class="t" style="left:550.11px;top:634.83px;font-size:10.6px;line-height:10.6px;letter-spacing:0.000px;color:#d2d3d5;transform-origin:0 0;transform:scaleX(0.9278);">Num Steps</div>
<div class="t" style="left:671.25px;top:623.63px;font-size:10.6px;line-height:10.6px;letter-spacing:0.000px;color:#d2d3d5;transform-origin:0 0;transform:scaleX(0.9490);">Stride</div>
<div class="a" style="left:897.8px;top:83px;width:334.2px;height:589px;background:#212429;box-shadow:inset 4px 3px 5px rgba(12,13,15,.6);"></div>
<svg style="left:0;top:0" width="1232" height="700" fill="none" stroke-linejoin="round" stroke-linecap="round"><g stroke="#fafafa" stroke-width="2.05"><path d="M922.3 110 L1094.3 101.4 L1193.7 112.3"/><path d="M922.3 110 V179.1 M1094.3 101.4 V188.6 M1193.7 112.3 V175.7"/><path d="M922.3 179.1 L1094.3 188.6 L1193.7 175.7"/><path d="M922.3 110 L1025.7 117.6 M1193.7 112.3 L1100 117.6"/><path d="M922.3 179.1 L1001.4 173.6 M1193.7 175.7 L1125.7 172.9"/></g><g stroke="#e2e2e2" stroke-width="1.35"><path d="M966.3 121.4 L1084.3 115.7 L1153.1 123.7"/><path d="M966.3 121.4 V167.7 M1084.3 115.7 V176 M1153.1 123.7 V165.7"/><path d="M966.3 167.7 L1084.3 176 L1153.1 165.7"/></g><circle cx="1063.5" cy="207.9" r="70.8" fill="#212429" stroke="#fafafa" stroke-width="2.1"/><circle cx="1063.5" cy="212.90" r="65.80" stroke="#fafafa" stroke-width="1.95"/><circle cx="1063.5" cy="218.20" r="60.50" stroke="#fafafa" stroke-width="1.95"/><circle cx="1063.5" cy="222.65" r="56.05" stroke="#fafafa" stroke-width="1.95"/><circle cx="1063.5" cy="226.80" r="51.90" stroke="#fafafa" stroke-width="1.95"/><circle cx="1063.5" cy="230.80" r="47.90" stroke="#fafafa" stroke-width="1.95"/><g stroke="#fafafa" stroke-width="2.2"><path d="M1063.6 289.6 L981.8 390.8 L1082 405.3 L1139.6 388.5 Z"/><path d="M1063.6 289.6 L1082 405.3"/></g><g stroke="#fafafa" stroke-width="2.05"><path d="M933.9 505.7 L1032.9 493.8 L1204.7 502.7"/><path d="M933.9 505.7 V569 M1032.9 493.8 V581 M1204.7 502.7 V571.4"/><path d="M933.9 569 L1032.9 581 L1204.7 571.4"/><path d="M933.9 505.7 L1019.5 509.4 M1204.7 502.7 L1088.9 510.5"/><path d="M933.9 569 L1019.2 565 M1204.7 571.4 L1089.8 564.6"/></g><g stroke="#f2f2f2" stroke-width="1.6"><path d="M974 515.6 L1042.5 507.9 L1161.1 514.4"/><path d="M974 515.6 V559.2 M1042.5 507.9 V566.9 M1161.1 514.4 V560.8"/><path d="M974 559.2 L1042.5 566.9 L1161.1 560.8"/></g><g stroke="#939496" stroke-width="2.35"><circle cx="931.1" cy="616.5" r="3.55"/><circle cx="946.6" cy="616.5" r="3.55"/><circle cx="971.2" cy="616.5" r="3.55"/><circle cx="987.3" cy="616.5" r="3.55"/><circle cx="1004.0" cy="616.5" r="3.55"/><circle cx="1028.3" cy="616.5" r="3.55"/><circle cx="1044.4" cy="616.5" r="3.55"/><circle cx="1069.1" cy="616.5" r="3.55"/><circle cx="1084.8" cy="616.5" r="3.55"/><circle cx="1100.6" cy="616.5" r="3.55"/><circle cx="1125.2" cy="616.5" r="3.55"/><circle cx="1140.6" cy="616.5" r="3.55"/><circle cx="1165.3" cy="616.5" r="3.55"/><circle cx="1182.4" cy="616.5" r="3.55"/><circle cx="1197.8" cy="616.5" r="3.55"/><circle cx="924.60" cy="638.5" r="3.55"/><circle cx="938.46" cy="638.5" r="3.55"/><circle cx="952.31" cy="638.5" r="3.55"/><circle cx="966.16" cy="638.5" r="3.55"/><circle cx="980.02" cy="638.5" r="3.55"/><circle cx="993.88" cy="638.5" r="3.55"/><circle cx="1007.73" cy="638.5" r="3.55"/><circle cx="1021.59" cy="638.5" r="3.55"/><circle cx="1035.44" cy="638.5" r="3.55"/><circle cx="1049.30" cy="638.5" r="3.55"/><circle cx="1063.15" cy="638.5" r="3.55"/><circle cx="1077.01" cy="638.5" r="3.55"/><circle cx="1090.86" cy="638.5" r="3.55"/><circle cx="1104.72" cy="638.5" r="3.55"/><circle cx="1118.57" cy="638.5" r="3.55"/><circle cx="1132.42" cy="638.5" r="3.55"/><circle cx="1146.28" cy="638.5" r="3.55"/><circle cx="1160.13" cy="638.5" r="3.55"/><circle cx="1173.99" cy="638.5" r="3.55"/><circle cx="1187.85" cy="638.5" r="3.55"/><circle cx="1201.70" cy="638.5" r="3.55"/></g><polygon points="903.8,627 910.6,622.5 910.6,631.5" fill="#8c8d8f"/><polygon points="1224.2,627 1217.6,622.5 1217.6,631.5" fill="#8c8d8f"/></svg>
<div class="t" style="left:918.68px;top:600.27px;font-size:9.6px;line-height:9.6px;letter-spacing:0.000px;color:#d6d6d6;transform-origin:0 0;transform:scaleX(1.0816);">C2</div>
<div class="t" style="left:1015.99px;top:600.27px;font-size:9.6px;line-height:9.6px;letter-spacing:0.000px;color:#d6d6d6;transform-origin:0 0;transform:scaleX(1.0724);">C3</div>
<div class="t" style="left:1112.49px;top:600.27px;font-size:9.6px;line-height:9.6px;letter-spacing:0.000px;color:#d6d6d6;transform-origin:0 0;transform:scaleX(1.0590);">C4</div></body></html>
